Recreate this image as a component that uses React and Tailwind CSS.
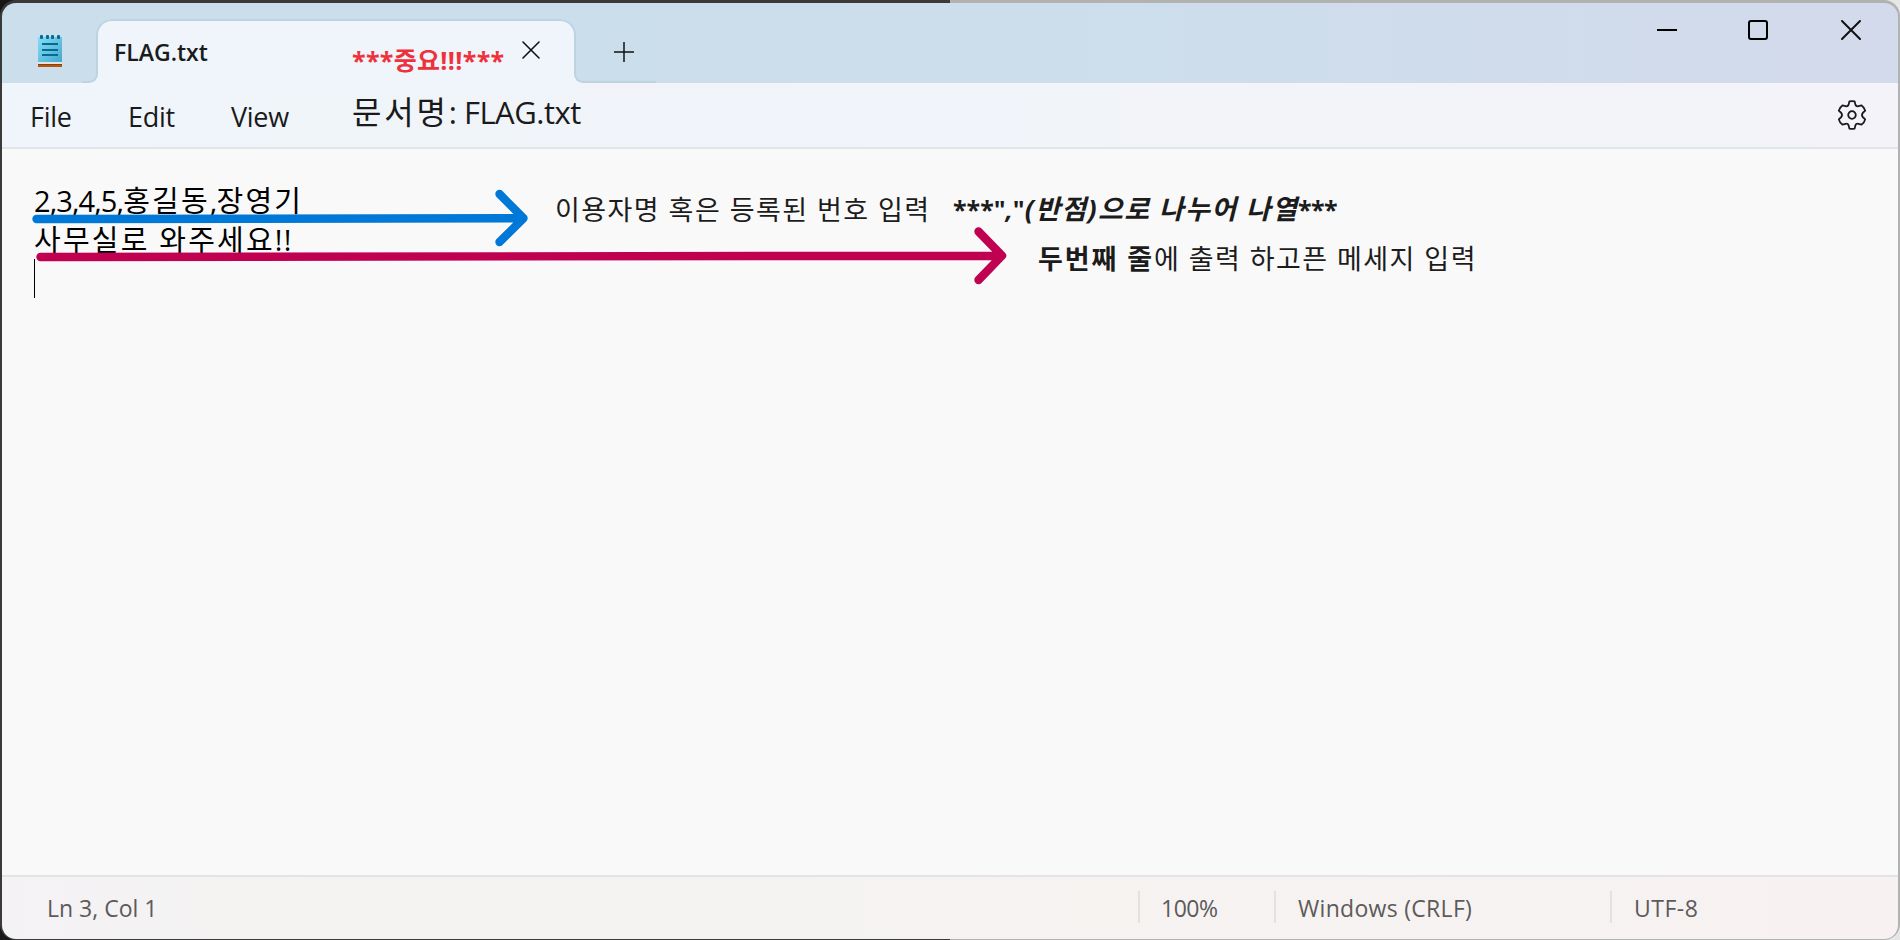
const latin = "font-['Open_Sans','Noto_Sans_CJK_KR',sans-serif]";

function NotepadIcon() {
  return (
    <svg className="block" width="24" height="33" viewBox="0 0 24 33">
      <defs>
        <linearGradient id="page" x1="0" y1="0" x2="1" y2="1">
          <stop offset="0" stopColor="#83def5" />
          <stop offset="1" stopColor="#45a9cd" />
        </linearGradient>
      </defs>
      <rect x="0" y="27" width="24" height="2" fill="#e4e2e3" />
      <rect x="0" y="29" width="24" height="3" fill="#b5560f" />
      <rect x="0" y="29" width="24" height="1" fill="#8f3f08" />
      <rect x="0" y="2" width="24" height="25" fill="url(#page)" />
      <g fill="#066a93">
        <rect x="2" y="0" width="3" height="4" rx="1" />
        <rect x="8" y="0" width="3" height="4" rx="1" />
        <rect x="13" y="0" width="3" height="4" rx="1" />
        <rect x="19" y="0" width="3" height="4" rx="1" />
        <rect x="4" y="8" width="16" height="2" />
        <rect x="4" y="14" width="16" height="2" />
        <rect x="4" y="19" width="16" height="2" />
      </g>
    </svg>
  );
}

function Cross({ size, width }) {
  return (
    <svg className="block" width={size} height={size} viewBox={`0 0 ${size} ${size}`}>
      <path d={`M1 1L${size - 1} ${size - 1}M${size - 1} 1L1 ${size - 1}`} stroke="#111" strokeWidth={width} strokeLinecap="round" />
    </svg>
  );
}

function Gear() {
  return (
    <svg className="block" width="30" height="32" viewBox="-15 -16 30 32" fill="none" stroke="#1a1a1a" strokeWidth="1.8" strokeLinejoin="round">
      <circle r="3.8" />
      <path d="M-2.6 -13.6Q0 -14.2 2.6 -13.6L3.4 -10.4Q4.2 -8.2 6.4 -8.8L9.6 -9.6Q12.4 -7.6 13.2 -4.4L10.7 -2Q9.2 0 10.7 2L13.2 4.4Q12.4 7.6 9.6 9.6L6.4 8.8Q4.2 8.2 3.4 10.4L2.6 13.6Q0 14.2 -2.6 13.6L-3.4 10.4Q-4.2 8.2 -6.4 8.8L-9.6 9.6Q-12.4 7.6 -13.2 4.4L-10.7 2Q-9.2 0 -10.7 -2L-13.2 -4.4Q-12.4 -7.6 -9.6 -9.6L-6.4 -8.8Q-4.2 -8.2 -3.4 -10.4Z" />
    </svg>
  );
}

function TitleBar() {
  return (
    <div className="flex h-[80px] shrink-0 bg-linear-to-r from-[#cadeeb] via-[#ccdeec] via-55% to-[#d3daeb]">
      <div className="flex w-[96px] shrink-0 flex-col justify-between">
        <div className="pt-[32px] pl-[36px]">
          <NotepadIcon />
        </div>
        <div className="flex justify-end">
          <div className="w-[16px] bg-[#eff5fa]">
            <div className="h-[10px] rounded-br-[9px] border-r-2 border-b-2 border-[#bed3e1] bg-[#cadeeb]" />
          </div>
        </div>
      </div>
      <div className="mt-[16px] flex w-[476px] shrink-0 flex-col rounded-t-[14px] bg-[#eff5fa]">
        <div className="-ml-[2px] flex h-[54px] w-[480px] rounded-t-[16px] border-x-2 border-t-2 border-[#bed3e1] bg-[#eff5fa] pl-[16px]">
          <div className="w-[238px] pt-[15px] text-[23px] leading-[32px] font-semibold text-[#191b1d]">FLAG.txt</div>
          <div className="w-[170px] pt-[22px] text-[25px] leading-[34px] font-bold tracking-[0.3px] text-[#ee323c]">***중요!!!***</div>
          <div className="pt-[20px]">
            <Cross size={18} width={1.6} />
          </div>
        </div>
      </div>
      <div className="flex flex-1 flex-col justify-between">
        <div className="pt-[39px] pl-[40px]">
          <svg className="block" width="20" height="20" viewBox="0 0 20 20">
            <path d="M0 10H20M10 0V20" stroke="#111" strokeWidth="1.5" />
          </svg>
        </div>
        <div className="w-[82px] bg-[#eff5fa]">
          <div className="h-[10px] rounded-bl-[9px] border-b-2 border-l-2 border-[#bed3e1] bg-[#cbdeeb]" />
        </div>
      </div>
      <div className="flex w-[252px] items-start pt-[17px] pl-[11px]">
        <div className="mt-[9px] h-[2px] w-[20px] bg-black" />
        <div className="ml-[71px] h-[20px] w-[20px] rounded-[3px] border-2 border-black" />
        <div className="ml-[73px]">
          <Cross size={20} width={2} />
        </div>
      </div>
    </div>
  );
}

function MenuBar() {
  return (
    <div className="flex h-[66px] shrink-0 border-b-2 border-[#e1e6ea] bg-linear-to-r from-[#eff5fa] to-[#f3f3f9] text-[27px] leading-[36px] text-[#1a1a1a]">
      <div className="w-[98px] pt-[16px] pl-[28px] tracking-[-0.3px]">File</div>
      <div className="w-[101px] pt-[16px] pl-[28px] tracking-[-0.3px]">Edit</div>
      <div className="w-[150px] pt-[16px] pl-[30px] tracking-[-0.3px]">View</div>
      <div className="flex-1 pt-[11px] pl-px text-[31px] tracking-[-0.5px]">
        <span className="text-[32px] tracking-[2.8px]">문서명</span>: FLAG.txt
      </div>
      <div className="pt-[16px] pr-[31px]">
        <Gear />
      </div>
    </div>
  );
}

function Arrows() {
  return (
    <svg className="absolute top-0 left-0" width="1100" height="160" viewBox="2 149 1100 160" fill="none" strokeWidth="8.4" strokeLinecap="round" strokeLinejoin="round">
      <path d="M36.5 219L523 218.3M499.5 194L523.5 218.3L499.5 242" stroke="#0078d7" />
      <path d="M40.5 257L1002 255.7M978.5 231.5L1002 255.7L978.5 280" stroke="#c00050" />
    </svg>
  );
}

function Editor() {
  return (
    <div className="relative flex-1 bg-[#f9f9f9]">
      <div className="pt-[32px] pl-[32px] text-[29px] leading-[39px] text-black">
        <div className="h-[39px] whitespace-pre">
          <span className="tracking-[-0.9px]">2,3,4,5,</span>
          <span className="tracking-[2.2px]">홍길동</span>
          <span className="tracking-[-0.8px]">,</span>
          <span className="tracking-[2.2px]">장영기</span>
        </div>
        <div className="h-[39px] tracking-[2.2px] whitespace-pre">사무실로 와주세요<span className="tracking-[1.4px]">!!</span></div>
        <div className="h-[39px] w-px bg-black" />
      </div>
      <Arrows />
      <div className="absolute top-[43px] left-[553px] text-[27px] leading-[36px] tracking-[1.45px] whitespace-pre text-[#1c1c1c]">이용자명 혹은 등록된 번호 입력</div>
      <div className="absolute top-[42px] left-[951px] text-[25px] leading-[36px] font-bold whitespace-pre text-[#1c1c1c]">
        ***"<i>,</i>"<i className="text-[27px] tracking-[1.35px]">(반점)으로 나누어 나열</i><span className="tracking-[-0.7px]">***</span>
      </div>
      <div className="absolute top-[92px] left-[1036px] text-[27px] leading-[36px] tracking-[1.45px] whitespace-pre text-[#1c1c1c]">
        <b className="tracking-[1.9px]">두번째 줄</b>에 출력 하고픈 메세지 입력
      </div>
    </div>
  );
}

function StatusBar() {
  return (
    <div className="flex h-[64px] shrink-0 border-t-2 border-[#e5e4e4] bg-linear-to-r from-[#f4f2f5] via-[#f4f3f1] via-15% to-[#f7f2f1] pt-[14px] text-[23px] leading-[34px] text-[#5c5a5a]">
      <div className="w-[1136px] pl-[45px]">Ln 3, Col 1</div>
      <div className="h-[32px] w-[136px] border-l-2 border-[#e6e1e1] pl-[21px] tracking-[-0.5px]">100%</div>
      <div className="h-[32px] w-[336px] border-l-2 border-[#e6e1e1] pl-[22px] tracking-[0.3px]">Windows (CRLF)</div>
      <div className="h-[32px] flex-1 border-l-2 border-[#e6e1e1] pl-[22px] tracking-[0.5px]">UTF-8</div>
    </div>
  );
}

export default function App() {
  return (
    <div className={`h-[940px] w-[1900px] overflow-hidden bg-linear-to-r from-[#171717] from-50% to-[#e6e6e6] to-50% ${latin}`}>
      <div className="h-[940px] rounded-[16px] bg-linear-to-r from-[#3a3a3a] from-50% to-[#b2b2b2] to-50% pt-[3px] pr-[2px] pb-px pl-[2px]">
        <div className="flex h-[936px] flex-col overflow-hidden rounded-[14px]">
          <TitleBar />
          <MenuBar />
          <Editor />
          <StatusBar />
        </div>
      </div>
    </div>
  );
}
